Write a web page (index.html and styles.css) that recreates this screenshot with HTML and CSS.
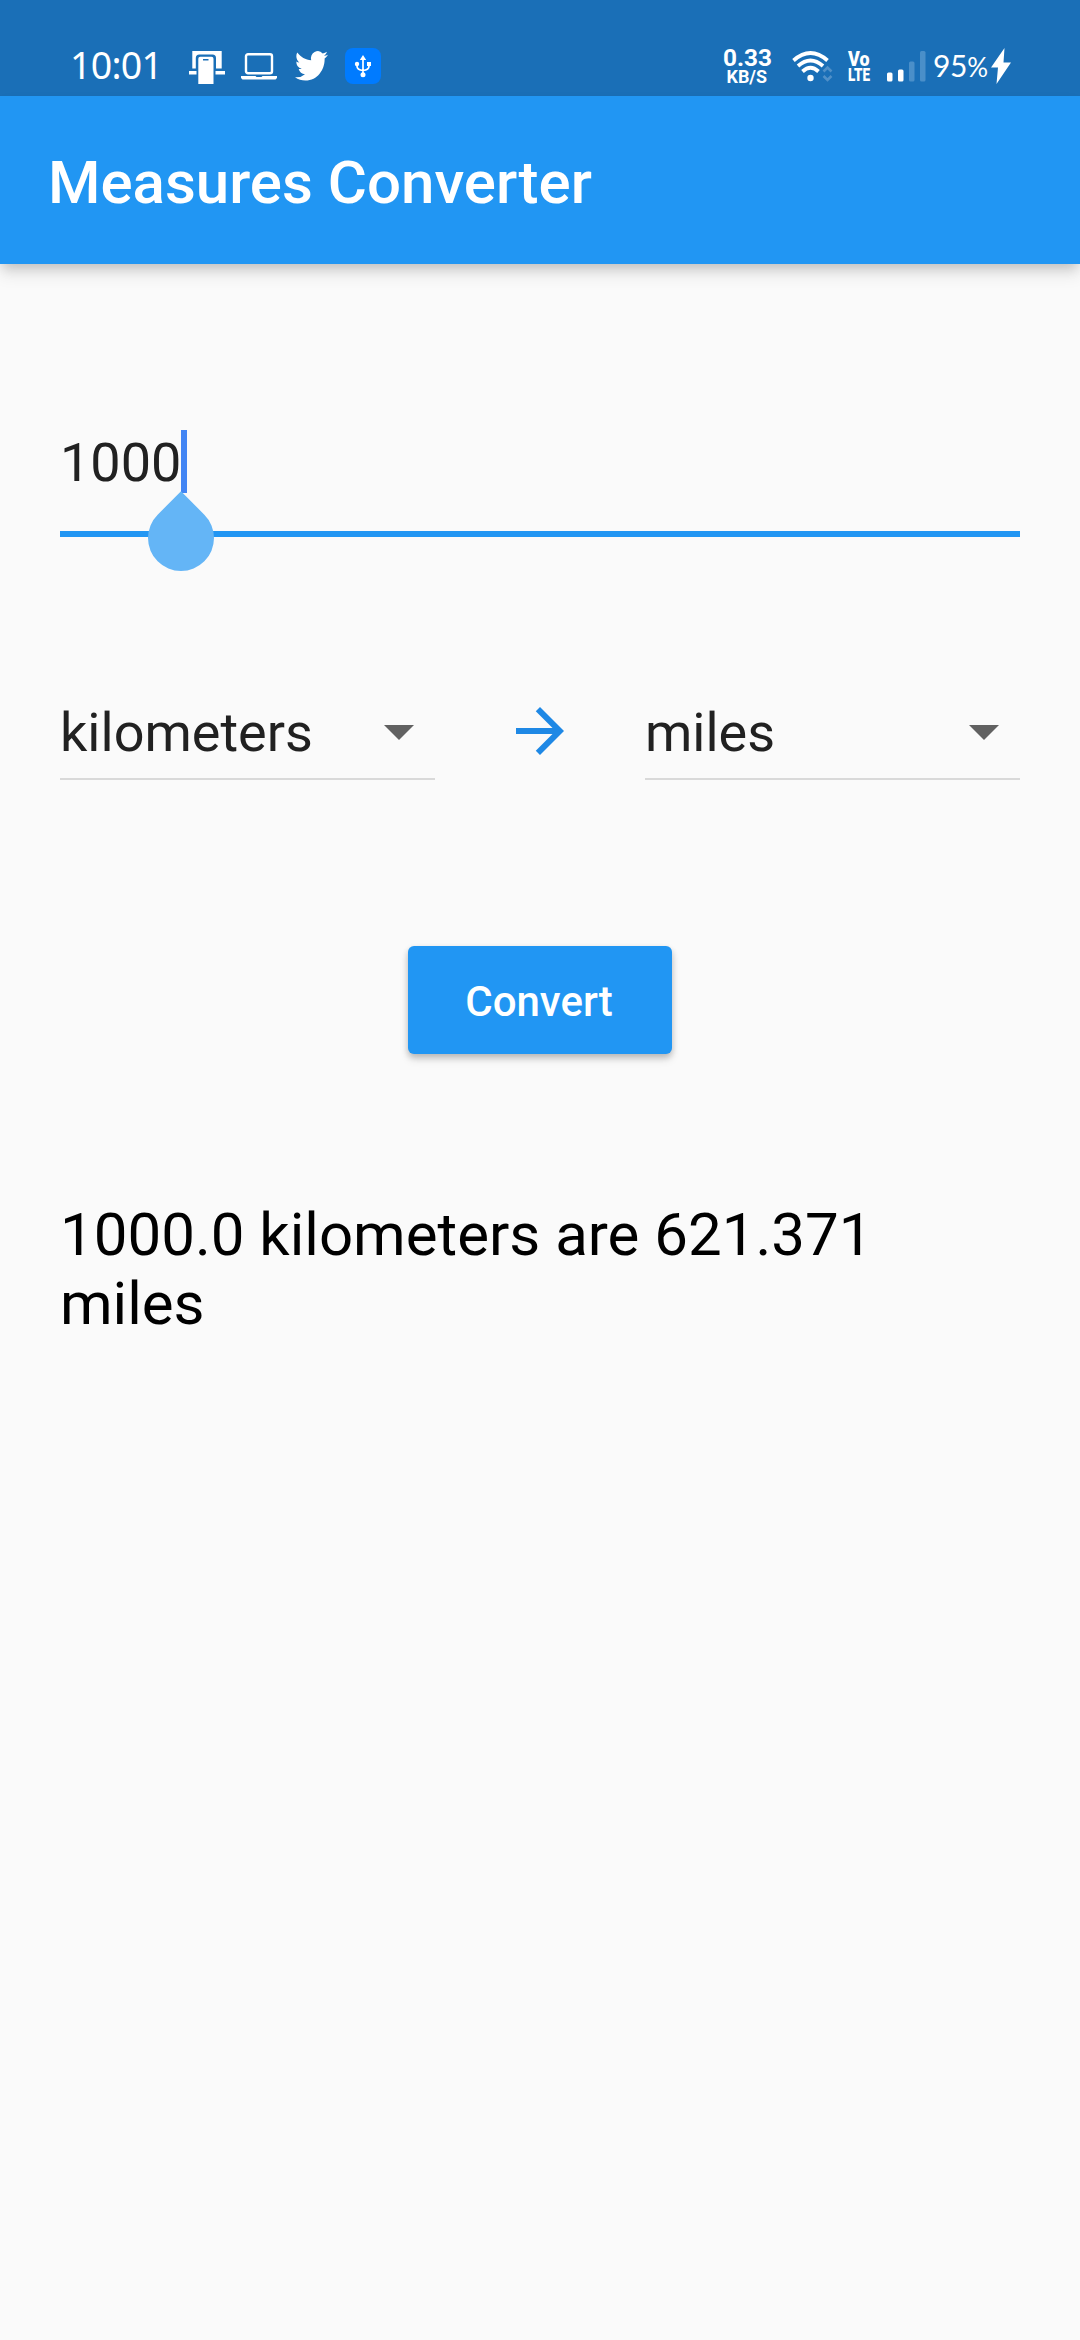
FILE: index.html
```html
<!DOCTYPE html>
<html lang="en">
<head>
<meta charset="utf-8">
<title>Measures Converter</title>
<link rel="stylesheet" href="styles.css">
</head>
<body>
<div class="status-bar">
  <span class="clock">10:01</span>
  <svg class="icon-device" width="36" height="34" viewBox="0 0 36 34" fill="#fff">
    <path d="M3.300 0H32.700V17.500H27V7a3.500 3.500 0 0 0-3.500-3.500H10.300A3.500 3.500 0 0 0 6.800 7v10.500H3.300zM0 20h7.500v3.500H0zM26.500 20H36v3.500h-9.500z"/>
    <path fill-rule="evenodd" d="M11.300 5.800h11.200a2 2 0 0 1 2 2V33H9.300V7.800a2 2 0 0 1 2-2zM14 8h5.500v1.500H14z"/>
  </svg>
  <svg class="icon-laptop" width="36" height="27" viewBox="0 0 36 27">
    <rect x="5" y="1.200" width="26" height="19" rx="2" fill="none" stroke="#fff" stroke-width="2.400"/>
    <path fill="#fff" d="M0 23h14.500l1 1h5l1-1H36v2l-1.500 1.500h-33L0 25z"/>
  </svg>
  <svg class="icon-bird" width="33" height="28" viewBox="0 2.800 24 18.600" preserveAspectRatio="none" fill="#fff">
    <path d="M23.953 4.570a10 10 0 0 1-2.825.775 4.958 4.958 0 0 0 2.163-2.723c-.951.555-2.005.959-3.127 1.184a4.920 4.920 0 0 0-8.384 4.482C7.690 8.095 4.067 6.130 1.640 3.162a4.822 4.822 0 0 0-.666 2.475c0 1.710.870 3.213 2.188 4.096a4.904 4.904 0 0 1-2.228-.616v.060a4.923 4.923 0 0 0 3.946 4.827 4.996 4.996 0 0 1-2.212.085 4.936 4.936 0 0 0 4.604 3.417 9.867 9.867 0 0 1-6.102 2.105c-.390 0-.779-.023-1.170-.067a13.995 13.995 0 0 0 7.557 2.209c9.053 0 13.998-7.496 13.998-13.985 0-.210 0-.420-.015-.630A9.935 9.935 0 0 0 24 4.590z"/>
  </svg>
  <svg class="icon-usb" width="36" height="36" viewBox="0 0 36 36">
    <rect width="36" height="36" rx="8" fill="#007bff"/>
    <path d="M18 10v17M12 16.500v1.500q0 4 6 4.500M24 16.500v1.500q0 4-6 4.500" fill="none" stroke="#fff" stroke-width="1.700"/>
    <path fill="#fff" d="M18 7l3.200 5h-6.400zM22 14h4v4h-4z"/>
    <circle cx="12" cy="16" r="2.200" fill="#fff"/>
    <circle cx="18" cy="26.700" r="2.500" fill="#fff"/>
  </svg>
  <div class="status-right">
    <svg class="net-speed" width="50" height="38" viewBox="0 0 50 38" fill="#fff">
      <text class="condensed" x="1" y="19.300" font-size="24.500" textLength="49" lengthAdjust="spacingAndGlyphs">0.33</text>
      <text class="condensed" x="4.500" y="36" font-size="18" textLength="40.500" lengthAdjust="spacingAndGlyphs">KB/S</text>
    </svg>
    <svg class="icon-wifi" width="40" height="31" viewBox="0 0 40 31" fill="none">
      <g stroke="#fff" stroke-width="3.800">
        <path d="M1.500 9.500Q18.500-5.500 35.500 9.500"/>
        <path d="M6 15Q18.500 4 31 15"/>
        <path d="M10.500 20.500Q18.500 13 26.500 20.500"/>
      </g>
      <circle cx="18.500" cy="27" r="3.200" fill="#fff"/>
      <path d="M31.500 20.500l4-4 4 4M31.500 25l4 4 4-4" stroke="#5090c8" stroke-width="2.600"/>
    </svg>
    <svg class="icon-volte" width="22" height="31" viewBox="0 0 22 31" fill="#fff">
      <text class="condensed heavy" x="0" y="14.500" font-size="19.500" textLength="21.500" lengthAdjust="spacingAndGlyphs">Vo</text>
      <text class="condensed heavy" x="0" y="30.200" font-size="19" textLength="22" lengthAdjust="spacingAndGlyphs">LTE</text>
    </svg>
    <svg class="icon-signal" width="39" height="31" viewBox="0 0 39 31" fill="#fff">
      <rect y="21.500" width="5.500" height="9" rx="1.500"/>
      <rect x="11" y="18.500" width="5.500" height="12" rx="1.500"/>
      <rect x="22" y="10.500" width="5.500" height="20" rx="1.500" fill="#4a8fc9"/>
      <rect x="33" y="0" width="5.500" height="30.500" rx="1.500" fill="#4a8fc9"/>
    </svg>
    <span class="battery">95<span class="percent">%</span></span>
    <svg class="icon-bolt" width="20" height="36" viewBox="0 0 20 36" fill="#fff">
      <path d="M13.500 0L0 19.500h7L5.500 36 20 14.500h-7.500z"/>
    </svg>
  </div>
</div>
<header class="app-bar"><h1 class="title">Measures Converter</h1></header>
<main class="content">
  <div class="field">
    <span class="value">1000</span><span class="caret"></span>
    <svg class="handle" width="66" height="80" viewBox="0 0 66 80">
      <path fill="#64b5f6" d="M33 .300L56.330 23.670A33 33 0 1 1 9.670 23.670z"/>
    </svg>
  </div>
  <div class="units">
    <div class="select">
      <span>kilometers</span>
      <svg class="chevron" width="30" height="15" viewBox="0 0 30 15"><path fill="#616161" d="M0 0h30L15 15z"/></svg>
    </div>
    <svg class="arrow" width="72" height="72" viewBox="0 0 24 24"><path fill="#1e88e5" d="M12 4l-1.410 1.410L16.170 11H4v2h12.170l-5.580 5.590L12 20l8-8z"/></svg>
    <div class="select">
      <span>miles</span>
      <svg class="chevron" width="30" height="15" viewBox="0 0 30 15"><path fill="#616161" d="M0 0h30L15 15z"/></svg>
    </div>
  </div>
  <button class="convert" type="button">Convert</button>
  <p class="result">1000.0 kilometers are 621.371 miles</p>
</main>
</body>
</html>
```

FILE: styles.css
```css
* { box-sizing: border-box; }
body {
  margin: 0;
  min-height: 2340px;
  background: #fafafa;
  font-family: Roboto, sans-serif;
  color: #212121;
}
svg { display: block; flex: none; overflow: visible; }

.status-bar {
  display: flex;
  align-items: flex-start;
  height: 96px;
  padding-left: 70px;
  background: #1a6fb7;
  color: #fff;
}
.clock {
  width: 119px;
  margin-top: 39px;
  font: 400 37.500px/52px "Noto Sans", sans-serif;
  letter-spacing: -.7px;
}
.icon-device { margin-top: 51px; }
.icon-laptop { margin: 53px 0 0 16px; }
.icon-bird { margin: 52px 0 0 18px; }
.icon-usb { margin: 48px 0 0 17px; }
.status-right {
  display: flex;
  align-items: flex-start;
  margin-left: auto;
  padding-right: 69px;
}
.condensed { font-family: Roboto, sans-serif; font-weight: 700; }
.heavy { font-weight: 900; }
.net-speed { margin-top: 47px; }
.icon-wifi { margin: 51px 0 0 20px; }
.icon-volte { margin: 51px 0 0 16px; }
.icon-signal { margin: 51px 0 0 17px; }
.battery {
  width: 58px;
  margin: 46px 0 0 7px;
  font: 400 30px/38px Lato, sans-serif;
  letter-spacing: -.3px;
  white-space: nowrap;
}
.percent { font-size: 26px; }
.icon-bolt { margin-top: 48px; }

.app-bar {
  height: 168px;
  padding: 52px 48px 0;
  background: #2196f3;
  box-shadow: 0 6px 12px -3px rgba(0, 0, 0, .2), 0 12px 15px rgba(0, 0, 0, .07);
}
.title {
  margin: 0;
  font-size: 60px;
  font-weight: 500;
  line-height: 70px;
  color: #fff;
}

.content {
  display: flex;
  flex-direction: column;
  padding: 162px 60px 0;
}
.field {
  position: relative;
  display: flex;
  height: 111px;
  border-bottom: 6px solid #2196f3;
}
.value { font-size: 54px; line-height: 73px; }
.caret { width: 6px; height: 63px; margin-top: 4px; background: #4285f4; }
.handle { position: absolute; left: 88px; top: 65px; }

.units {
  display: grid;
  grid-template-columns: 375px 72px 375px;
  justify-content: space-between;
  align-items: start;
  margin-top: 158px;
}
.select {
  display: flex;
  justify-content: space-between;
  height: 85px;
  padding-right: 21px;
  border-bottom: 2px solid #d9d9d9;
  font-size: 54px;
  line-height: 76px;
}
.chevron { margin-top: 30px; }

.convert {
  align-self: center;
  width: 264px;
  height: 108px;
  margin-top: 166px;
  padding: 2px 2px 0 0;
  border: 0;
  border-radius: 6px;
  background: #2196f3;
  color: #fff;
  font: 500 42px/49px Roboto, sans-serif;
  box-shadow: 0 3px 6px rgba(0, 0, 0, .2), 0 6px 9px rgba(0, 0, 0, .1);
}
.result {
  margin: 146px 0 0;
  color: #000;
  font-size: 60px;
  line-height: 69px;
}
```
